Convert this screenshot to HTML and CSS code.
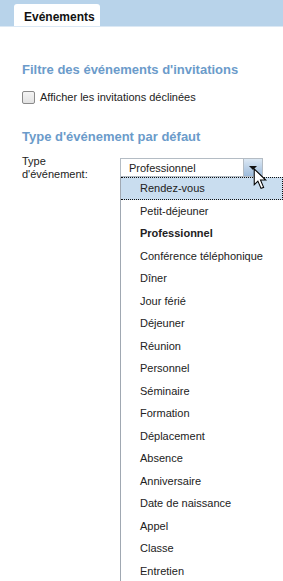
FILE: index.html
```html
<!DOCTYPE html>
<html lang="fr">

<head>
    <meta charset="UTF-8">
    <title>Options - Evénements</title>
    <link rel="stylesheet" href="styles.css">
</head>

<body>
    <div class="tabbar">
        <div class="tab">Evénements</div>
    </div>

    <div class="content">
        <h2>Filtre des événements d'invitations</h2>
        <label class="check">
            <span class="box"></span>
            Afficher les invitations déclinées
        </label>

        <h2 class="second">Type d'événement par défaut</h2>
        <div class="row">
            <div class="field-label">Type<br>d'événement:</div>
            <div class="select-wrap">
                <div class="select">
                    <span class="value">Professionnel</span>
                    <span class="arrow"></span>
                </div>
                <ul class="options">
                    <li class="hover">Rendez-vous</li>
                    <li>Petit-déjeuner</li>
                    <li class="selected">Professionnel</li>
                    <li>Conférence téléphonique</li>
                    <li>Dîner</li>
                    <li>Jour férié</li>
                    <li>Déjeuner</li>
                    <li>Réunion</li>
                    <li>Personnel</li>
                    <li>Séminaire</li>
                    <li>Formation</li>
                    <li>Déplacement</li>
                    <li>Absence</li>
                    <li>Anniversaire</li>
                    <li>Date de naissance</li>
                    <li>Appel</li>
                    <li>Classe</li>
                    <li>Entretien</li>
                </ul>
                <svg class="cursor" width="15" height="23" viewBox="0 0 14 22">
                    <path d="M1 1 L1 16 L4.5 12.5 L7.5 19.5 L10 18.5 L7 11.5 L12 11.5 Z" fill="#fff" stroke="#000" stroke-width="1"/>
                </svg>
            </div>
        </div>
    </div>
</body>

</html>
```

FILE: styles.css
```css
body {
    margin: 0;
    font-family: "Liberation Sans", Arial, sans-serif;
    font-size: 11px;
    color: #222;
    background: white;
    overflow: hidden;
}

.tabbar {
    height: 26px;
    background: #b8d3ea;
    border-bottom: 1px solid #dbe8f4;
    padding-left: 14px;
    display: flex;
    align-items: flex-end;
}

.tab {
    background: white;
    height: 22px;
    width: 86px;
    box-sizing: border-box;
    padding: 6px 0 0 10px;
    border-radius: 3px 3px 0 0;
    font-weight: bold;
    font-size: 12px;
    color: #111;
}

.content {
    padding: 0 0 0 22px;
}

h2 {
    margin: 35px 0 0;
    font-size: 13px;
    color: #6b9bca;
    font-weight: bold;
    line-height: 16px;
}

h2.second {
    margin-top: 25px;
}

.check {
    display: flex;
    align-items: center;
    gap: 5px;
    margin-top: 12px;
    line-height: 14px;
}

.box {
    width: 11px;
    height: 11px;
    border: 1px solid #8a8a8a;
    border-radius: 2px;
    background: linear-gradient(#f4f4f4, #e2e2e2);
}

.row {
    display: flex;
    margin-top: 13px;
}

.field-label {
    width: 98px;
    line-height: 13px;
    margin-top: -3px;
}

.select-wrap {
    position: relative;
    flex: 1;
}

.select {
    width: 143px;
    height: 19px;
    box-sizing: border-box;
    border: 1px solid #b4bcc4;
    display: flex;
    align-items: center;
}

.value {
    flex: 1;
    padding-left: 8px;
}

.arrow {
    width: 18px;
    height: 17px;
    border-left: 1px solid #b4bcc4;
    background: linear-gradient(#dce8f4, #9dbbdb);
    position: relative;
}

.arrow::after {
    content: "";
    position: absolute;
    left: 5px;
    top: 7px;
    border-left: 4px solid transparent;
    border-right: 4px solid transparent;
    border-top: 4px solid #111;
}

.options {
    list-style: none;
    margin: 0;
    padding: 0;
    border-left: 1px solid #a0a8b2;
}

.options li {
    height: 22.5px;
    line-height: 22.5px;
    padding-left: 19px;
    box-sizing: border-box;
    white-space: nowrap;
}

.options li.hover {
    background: #c9ddef;
    border: 1px dotted #111;
    border-left: 0;
    line-height: 20.5px;
}

.options li.selected {
    font-weight: bold;
}

.cursor {
    position: absolute;
    left: 133px;
    top: 10px;
}
```
